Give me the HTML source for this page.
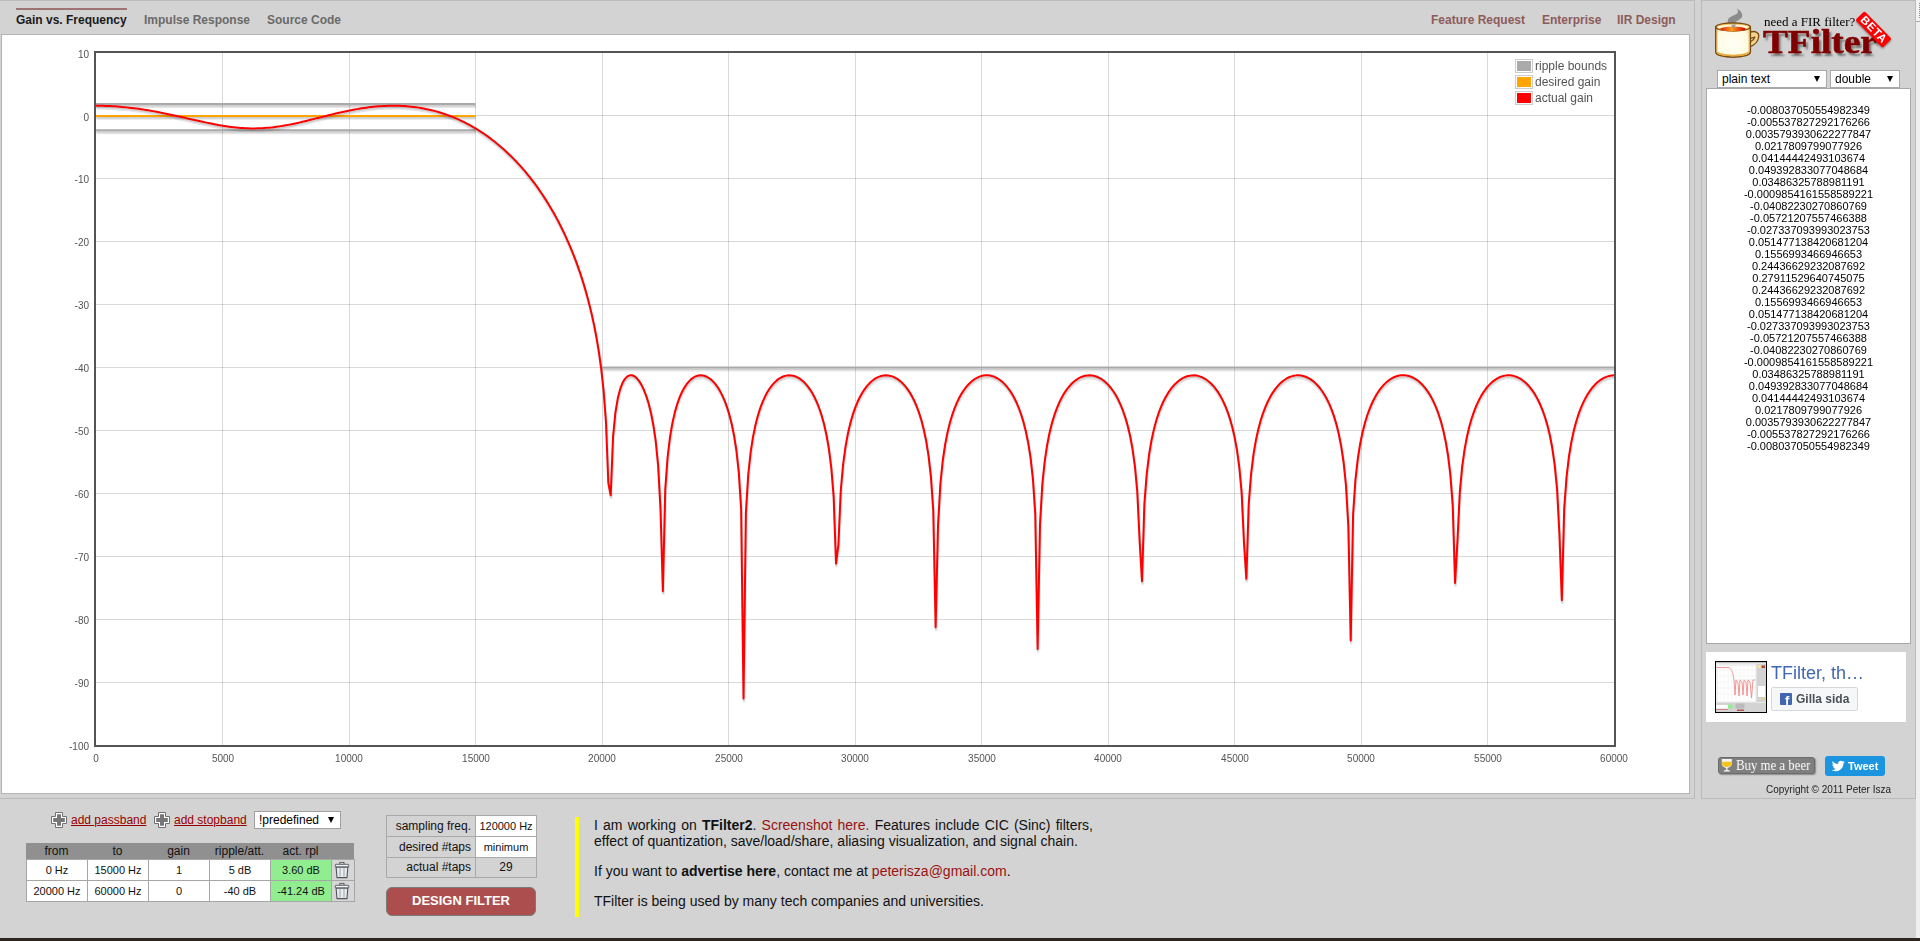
<!DOCTYPE html>
<html><head><meta charset="utf-8"><title>TFilter</title>
<style>
html,body{margin:0;padding:0}
body{width:1920px;height:941px;overflow:hidden;position:relative;background:#d3d3d3;font-family:"Liberation Sans",sans-serif;color:#111}
.abs{position:absolute}
.t{position:absolute;white-space:nowrap}
#maincont{position:absolute;left:0;top:0;width:1694px;height:797px;border-top:1px solid #bababa;border-right:1px solid #bababa;border-bottom:1px solid #bababa}
#panel{position:absolute;left:1px;top:34px;width:1687px;height:758px;border:1px solid #b4b4b4;background:#fff}
.tab{position:absolute;top:13px;font-size:12px;line-height:14px;font-weight:bold;color:#6a6a6a;white-space:nowrap}
.lnk{position:absolute;top:13px;font-size:12px;line-height:14px;font-weight:bold;color:#8e5b5b;white-space:nowrap}
.yl{position:absolute;will-change:transform;left:40.5px;width:48px;text-align:right;font-size:10px;line-height:12px;color:#545454}
.xl{position:absolute;will-change:transform;top:752.5px;width:60px;text-align:center;font-size:10px;line-height:12px;color:#545454}
.lg{position:absolute;left:1515px;width:16px;height:12px;border:1px solid #ccc;background:#fff}
.lg i{position:absolute;left:1px;top:1px;width:14px;height:10px}
.lgt{position:absolute;will-change:transform;left:1535px;font-size:12px;line-height:14px;color:#545454;white-space:nowrap}
#side{position:absolute;left:1701px;top:0;width:213px;height:797px;border:1px solid #bababa;border-top-color:#bababa}
.sel{position:absolute;background:#fff;border:1px solid #a9a9a9;box-sizing:border-box;font-size:12px;line-height:15px;color:#000}
.sel span{position:absolute;left:4px;top:1px}
.arr{position:absolute;top:5px;width:0;height:0;border-left:3.5px solid transparent;border-right:3.5px solid transparent;border-top:6px solid #000}
#ta{position:absolute;left:1706px;top:88px;width:203px;height:554px;border:1px solid #a9a9a9;background:#fff}
#coefs{position:absolute;left:0;top:15px;width:203px;text-align:center;font-size:11px;line-height:12px;color:#000}
.bt{position:absolute;font-size:12px;line-height:14px;color:#111;white-space:nowrap}
.cell{position:absolute;background:#fff;font-size:11px;line-height:20px;text-align:center;color:#111;height:20px}
.pcell{position:absolute;height:20px;line-height:20px;font-size:12px;color:#111}
</style></head><body>

<div id="maincont"></div>
<!-- tabs -->
<div class="abs" style="left:16px;top:8px;width:111px;height:2px;background:#9e7373"></div>
<div class="tab" style="left:16px;color:#1a1a1a">Gain vs. Frequency</div>
<div class="tab" style="left:144px">Impulse Response</div>
<div class="tab" style="left:267px">Source Code</div>
<div class="lnk" style="left:1431px">Feature Request</div>
<div class="lnk" style="left:1542px">Enterprise</div>
<div class="lnk" style="left:1617px">IIR Design</div>

<div id="panel"></div>
<svg id="chart" width="1920" height="941" viewBox="0 0 1920 941" style="position:absolute;left:0;top:0">
<defs><path id="pr" d="M96.00 105.74L98.37 105.75L100.74 105.78L103.12 105.83L105.49 105.90L107.86 105.99L110.23 106.10L112.60 106.22L114.97 106.37L117.35 106.53L119.72 106.72L122.09 106.92L124.46 107.14L126.83 107.38L129.21 107.64L131.58 107.91L133.95 108.20L136.32 108.51L138.69 108.84L141.07 109.18L143.44 109.54L145.81 109.92L148.18 110.31L150.55 110.71L152.93 111.13L155.30 111.57L157.67 112.01L160.04 112.47L162.41 112.94L164.78 113.42L167.16 113.92L169.53 114.42L171.90 114.93L174.27 115.44L176.64 115.97L179.02 116.50L181.39 117.03L183.76 117.57L186.13 118.11L188.50 118.65L190.88 119.19L193.25 119.73L195.62 120.27L197.99 120.80L200.36 121.33L202.73 121.85L205.11 122.36L207.48 122.86L209.85 123.35L212.22 123.82L214.59 124.28L216.97 124.73L219.34 125.15L221.71 125.56L224.08 125.94L226.45 126.31L228.82 126.64L231.20 126.96L233.57 127.24L235.94 127.50L238.31 127.72L240.68 127.92L243.06 128.09L245.43 128.22L247.80 128.32L250.17 128.38L252.54 128.41L254.92 128.41L257.29 128.37L259.66 128.30L262.03 128.19L264.40 128.05L266.77 127.87L269.15 127.66L271.52 127.42L273.89 127.14L276.26 126.83L278.63 126.50L281.01 126.13L283.38 125.74L285.75 125.33L288.12 124.88L290.49 124.42L292.87 123.93L295.24 123.43L297.61 122.91L299.98 122.37L302.35 121.81L304.73 121.25L307.10 120.67L309.47 120.09L311.84 119.50L314.21 118.90L316.58 118.30L318.96 117.70L321.33 117.10L323.70 116.50L326.07 115.91L328.44 115.32L330.82 114.73L333.19 114.15L335.56 113.59L337.93 113.03L340.30 112.49L342.68 111.96L345.05 111.44L347.42 110.94L349.79 110.46L352.16 109.99L354.53 109.55L356.91 109.12L359.28 108.72L361.65 108.33L364.02 107.97L366.39 107.64L368.77 107.33L371.14 107.04L373.51 106.78L375.88 106.55L378.25 106.34L380.62 106.17L383.00 106.02L385.37 105.90L387.74 105.81L390.11 105.75L392.48 105.72L394.86 105.73L397.23 105.76L399.60 105.83L401.97 105.94L404.34 106.07L406.72 106.25L409.09 106.45L411.46 106.69L413.83 106.97L416.20 107.28L418.57 107.63L420.95 108.02L423.32 108.45L425.69 108.91L428.06 109.41L430.43 109.95L432.81 110.53L435.18 111.15L437.55 111.82L439.92 112.52L442.29 113.26L444.67 114.05L447.04 114.88L449.41 115.75L451.78 116.67L454.15 117.63L456.52 118.64L458.90 119.69L461.27 120.79L463.64 121.94L466.01 123.13L468.38 124.38L470.76 125.67L473.13 127.01L475.50 128.41L477.87 129.85L480.24 131.35L482.62 132.91L484.99 134.52L487.36 136.18L489.73 137.91L492.10 139.69L494.48 141.53L496.85 143.43L499.22 145.40L501.59 147.43L503.96 149.52L506.33 151.69L508.71 153.92L511.08 156.22L513.45 158.60L515.82 161.05L518.19 163.58L520.57 166.19L522.94 168.88L525.31 171.66L527.68 174.52L530.05 177.48L532.42 180.53L534.80 183.69L537.17 186.94L539.54 190.31L541.91 193.78L544.28 197.38L546.66 201.10L549.03 204.95L551.40 208.94L553.77 213.08L556.14 217.37L558.52 221.84L560.89 226.48L563.26 231.31L565.63 236.35L568.00 241.61L570.38 247.12L572.75 252.90L575.12 258.98L577.49 265.40L579.86 272.19L582.23 279.41L584.61 287.12L586.98 295.42L589.35 304.41L591.72 314.25L594.09 325.16L596.47 337.47L598.84 351.70L601.21 368.76L603.58 390.50L605.95 421.58L608.33 482.81L610.70 495.20L613.07 436.39L615.44 412.23L617.81 398.12L620.18 388.97L622.56 382.85L624.93 378.84L627.30 376.41L629.67 375.28L632.04 375.26L634.42 376.23L636.79 378.15L639.16 381.02L641.53 384.86L643.90 389.77L646.27 395.90L648.65 403.51L651.02 413.03L653.39 425.20L655.76 441.48L658.13 465.34L660.51 509.12L662.88 591.14L665.25 489.66L667.62 456.85L669.99 437.08L672.37 423.17L674.74 412.64L677.11 404.35L679.48 397.69L681.85 392.26L684.23 387.84L686.60 384.24L688.97 381.35L691.34 379.09L693.71 377.40L696.08 376.22L698.46 375.54L700.83 375.32L703.20 375.55L705.57 376.23L707.94 377.37L710.32 378.97L712.69 381.06L715.06 383.66L717.43 386.83L719.80 390.62L722.17 395.13L724.55 400.46L726.92 406.80L729.29 414.41L731.66 423.68L734.03 435.29L736.41 450.50L738.78 472.13L741.15 509.05L743.52 698.55L745.89 512.75L748.27 474.25L750.64 452.20L753.01 436.86L755.38 425.23L757.75 415.98L760.12 408.42L762.50 402.12L764.87 396.81L767.24 392.32L769.61 388.52L771.98 385.31L774.36 382.63L776.73 380.41L779.10 378.63L781.47 377.26L783.84 376.26L786.22 375.62L788.59 375.34L790.96 375.40L793.33 375.81L795.70 376.57L798.08 377.69L800.45 379.18L802.82 381.05L805.19 383.34L807.56 386.08L809.93 389.31L812.31 393.09L814.68 397.51L817.05 402.68L819.42 408.74L821.79 415.93L824.17 424.57L826.54 435.23L828.91 448.87L831.28 467.53L833.65 496.57L836.02 563.55L838.40 544.80L840.77 490.50L843.14 464.03L845.51 446.53L847.88 433.56L850.26 423.37L852.63 415.06L855.00 408.14L857.37 402.28L859.74 397.29L862.12 393.01L864.49 389.35L866.86 386.21L869.23 383.54L871.60 381.30L873.98 379.45L876.35 377.97L878.72 376.83L881.09 376.02L883.46 375.53L885.83 375.35L888.21 375.48L890.58 375.92L892.95 376.67L895.32 377.75L897.69 379.17L900.07 380.93L902.44 383.07L904.81 385.61L907.18 388.60L909.55 392.08L911.92 396.12L914.30 400.81L916.67 406.27L919.04 412.67L921.41 420.26L923.78 429.43L926.16 440.81L928.53 455.59L930.90 476.34L933.27 510.74L935.64 627.31L938.02 525.50L940.39 483.70L942.76 460.50L945.13 444.49L947.50 432.37L949.88 422.71L952.25 414.77L954.62 408.10L956.99 402.42L959.36 397.55L961.73 393.36L964.11 389.74L966.48 386.62L968.85 383.96L971.22 381.70L973.59 379.81L975.97 378.27L978.34 377.07L980.71 376.17L983.08 375.58L985.45 375.29L987.83 375.28L990.20 375.57L992.57 376.16L994.94 377.05L997.31 378.25L999.68 379.77L1002.06 381.63L1004.43 383.87L1006.80 386.49L1009.17 389.56L1011.54 393.12L1013.92 397.23L1016.29 401.99L1018.66 407.52L1021.03 413.99L1023.40 421.66L1025.78 430.93L1028.15 442.44L1030.52 457.42L1032.89 478.53L1035.26 513.90L1037.63 648.93L1040.01 524.01L1042.38 483.58L1044.75 460.79L1047.12 444.98L1049.49 432.96L1051.87 423.36L1054.24 415.45L1056.61 408.79L1058.98 403.12L1061.35 398.24L1063.72 394.03L1066.10 390.38L1068.47 387.24L1070.84 384.54L1073.21 382.23L1075.58 380.30L1077.96 378.71L1080.33 377.44L1082.70 376.47L1085.07 375.81L1087.44 375.43L1089.82 375.34L1092.19 375.53L1094.56 376.01L1096.93 376.78L1099.30 377.85L1101.67 379.23L1104.05 380.93L1106.42 382.98L1108.79 385.41L1111.16 388.25L1113.53 391.53L1115.91 395.33L1118.28 399.72L1120.65 404.80L1123.02 410.71L1125.39 417.65L1127.77 425.93L1130.14 436.03L1132.51 448.79L1134.88 465.83L1137.25 491.17L1139.62 540.58L1142.00 581.29L1144.37 504.18L1146.74 473.58L1149.11 454.28L1151.48 440.26L1153.86 429.35L1156.23 420.49L1158.60 413.12L1160.97 406.88L1163.34 401.53L1165.72 396.92L1168.09 392.92L1170.46 389.46L1172.83 386.47L1175.20 383.90L1177.58 381.72L1179.95 379.89L1182.32 378.39L1184.69 377.20L1187.06 376.31L1189.43 375.71L1191.81 375.39L1194.18 375.36L1196.55 375.60L1198.92 376.12L1201.29 376.93L1203.67 378.04L1206.04 379.45L1208.41 381.19L1210.78 383.27L1213.15 385.72L1215.53 388.58L1217.90 391.89L1220.27 395.72L1222.64 400.13L1225.01 405.23L1227.38 411.16L1229.76 418.13L1232.13 426.45L1234.50 436.59L1236.87 449.40L1239.24 466.54L1241.62 492.09L1243.99 542.33L1246.36 578.84L1248.73 503.84L1251.10 473.53L1253.47 454.35L1255.85 440.39L1258.22 429.51L1260.59 420.68L1262.96 413.31L1265.33 407.07L1267.71 401.73L1270.08 397.11L1272.45 393.10L1274.82 389.63L1277.19 386.63L1279.57 384.05L1281.94 381.85L1284.31 380.00L1286.68 378.48L1289.05 377.26L1291.42 376.35L1293.80 375.72L1296.17 375.37L1298.54 375.30L1300.91 375.51L1303.28 375.99L1305.66 376.76L1308.03 377.81L1310.40 379.17L1312.77 380.85L1315.14 382.86L1317.52 385.24L1319.89 388.02L1322.26 391.23L1324.63 394.94L1327.00 399.21L1329.38 404.15L1331.75 409.89L1334.12 416.60L1336.49 424.58L1338.86 434.25L1341.23 446.34L1343.61 462.27L1345.98 485.25L1348.35 526.28L1350.72 640.44L1353.09 514.22L1355.47 479.27L1357.84 458.31L1360.21 443.41L1362.58 431.94L1364.95 422.69L1367.33 415.02L1369.70 408.54L1372.07 402.99L1374.44 398.20L1376.81 394.06L1379.18 390.46L1381.56 387.34L1383.93 384.65L1386.30 382.35L1388.67 380.40L1391.04 378.79L1393.42 377.49L1395.79 376.48L1398.16 375.77L1400.53 375.33L1402.90 375.17L1405.28 375.28L1407.65 375.67L1410.02 376.33L1412.39 377.29L1414.76 378.53L1417.13 380.09L1419.51 381.97L1421.88 384.20L1424.25 386.82L1426.62 389.85L1428.99 393.35L1431.37 397.38L1433.74 402.03L1436.11 407.42L1438.48 413.70L1440.85 421.10L1443.22 429.99L1445.60 440.93L1447.97 454.99L1450.34 474.35L1452.71 505.07L1455.08 582.93L1457.46 540.80L1459.83 491.67L1462.20 466.40L1464.57 449.39L1466.94 436.65L1469.32 426.56L1471.69 418.27L1474.06 411.32L1476.43 405.40L1478.80 400.31L1481.17 395.90L1483.55 392.08L1485.92 388.76L1488.29 385.90L1490.66 383.43L1493.03 381.34L1495.41 379.58L1497.78 378.15L1500.15 377.01L1502.52 376.17L1504.89 375.62L1507.27 375.33L1509.64 375.32L1512.01 375.59L1514.38 376.13L1516.75 376.95L1519.12 378.06L1521.50 379.48L1523.87 381.21L1526.24 383.28L1528.61 385.72L1530.98 388.56L1533.36 391.84L1535.73 395.62L1538.10 399.98L1540.47 405.02L1542.84 410.87L1545.22 417.72L1547.59 425.88L1549.96 435.80L1552.33 448.27L1554.70 464.82L1557.08 489.10L1559.45 534.50L1561.82 600.25L1564.19 508.86L1566.56 476.52L1568.93 456.53L1571.31 442.14L1573.68 430.98L1576.05 421.95L1578.42 414.44L1580.79 408.08L1583.17 402.63L1585.54 397.92L1587.91 393.84L1590.28 390.30L1592.65 387.23L1595.03 384.59L1597.40 382.33L1599.77 380.42L1602.14 378.84L1604.51 377.56L1606.88 376.59L1609.26 375.90L1611.63 375.49L1614.00 375.35"/><path id="pg" d="M96.00 104.02L475.50 104.02M96.00 130.32L475.50 130.32M602.00 367.55L1614.00 367.55"/><path id="po" d="M96.00 115.91L475.50 115.91"/></defs>
<g fill="rgba(0,0,0,0.15)"><rect x="222" y="53" width="1" height="692"/><rect x="349" y="53" width="1" height="692"/><rect x="475" y="53" width="1" height="692"/><rect x="602" y="53" width="1" height="692"/><rect x="728" y="53" width="1" height="692"/><rect x="855" y="53" width="1" height="692"/><rect x="981" y="53" width="1" height="692"/><rect x="1108" y="53" width="1" height="692"/><rect x="1234" y="53" width="1" height="692"/><rect x="1361" y="53" width="1" height="692"/><rect x="1487" y="53" width="1" height="692"/><rect x="96" y="115" width="1518" height="1"/><rect x="96" y="178" width="1518" height="1"/><rect x="96" y="241" width="1518" height="1"/><rect x="96" y="304" width="1518" height="1"/><rect x="96" y="367" width="1518" height="1"/><rect x="96" y="430" width="1518" height="1"/><rect x="96" y="493" width="1518" height="1"/><rect x="96" y="556" width="1518" height="1"/><rect x="96" y="619" width="1518" height="1"/><rect x="96" y="682" width="1518" height="1"/></g>
<rect x="95" y="52" width="1520" height="694" fill="none" stroke="#545454" stroke-width="2"/>
<g fill="none" stroke-linejoin="round">
<use href="#pg" transform="translate(0.434 2.462)" stroke="rgba(0,0,0,0.1)" stroke-width="3"/><use href="#pg" transform="translate(0.304 1.723)" stroke="rgba(0,0,0,0.1)" stroke-width="1.5"/><use href="#pg" stroke="#aaa" stroke-width="2"/>
<use href="#po" transform="translate(0.434 2.462)" stroke="rgba(0,0,0,0.1)" stroke-width="3"/><use href="#po" transform="translate(0.304 1.723)" stroke="rgba(0,0,0,0.1)" stroke-width="1.5"/><use href="#po" stroke="#ffa500" stroke-width="2"/>
<use href="#pr" transform="translate(0.434 2.462)" stroke="rgba(0,0,0,0.1)" stroke-width="3"/><use href="#pr" transform="translate(0.304 1.723)" stroke="rgba(0,0,0,0.1)" stroke-width="1.5"/><use href="#pr" stroke="#f00" stroke-width="2"/>
</g>
</svg>
<div class="yl" style="top:48.6px">10</div>
<div class="yl" style="top:111.5px">0</div>
<div class="yl" style="top:174.4px">-10</div>
<div class="yl" style="top:237.3px">-20</div>
<div class="yl" style="top:300.2px">-30</div>
<div class="yl" style="top:363.1px">-40</div>
<div class="yl" style="top:426.1px">-50</div>
<div class="yl" style="top:489.0px">-60</div>
<div class="yl" style="top:551.9px">-70</div>
<div class="yl" style="top:614.8px">-80</div>
<div class="yl" style="top:677.7px">-90</div>
<div class="yl" style="top:740.6px">-100</div>
<div class="xl" style="left:66.3px">0</div>
<div class="xl" style="left:192.8px">5000</div>
<div class="xl" style="left:319.3px">10000</div>
<div class="xl" style="left:445.8px">15000</div>
<div class="xl" style="left:572.3px">20000</div>
<div class="xl" style="left:698.8px">25000</div>
<div class="xl" style="left:825.3px">30000</div>
<div class="xl" style="left:951.8px">35000</div>
<div class="xl" style="left:1078.3px">40000</div>
<div class="xl" style="left:1204.8px">45000</div>
<div class="xl" style="left:1331.3px">50000</div>
<div class="xl" style="left:1457.8px">55000</div>
<div class="xl" style="left:1584.3px">60000</div>
<!-- legend -->
<div class="lg" style="top:59px"><i style="background:#aaa"></i></div>
<div class="lg" style="top:75px"><i style="background:#ffa500"></i></div>
<div class="lg" style="top:91px"><i style="background:#f00"></i></div>
<div class="lgt" style="top:59px">ripple bounds</div>
<div class="lgt" style="top:75px">desired gain</div>
<div class="lgt" style="top:91px">actual gain</div>

<!-- sidebar -->
<div id="side"></div>
<div class="abs" style="left:1916px;top:0;width:4px;height:938px;background:#f0f0f0"></div>
<div class="abs" style="left:1916px;top:0;width:4px;height:21px;background:#f4f4f4;border-bottom:1px solid #a8a8a8"><i style="position:absolute;left:3px;top:3px;width:1px;height:1px;background:#8c8c8c"></i><i style="position:absolute;left:3px;top:5px;width:1px;height:1px;background:#8c8c8c"></i><i style="position:absolute;left:3px;top:7px;width:1px;height:1px;background:#8c8c8c"></i><i style="position:absolute;left:3px;top:9px;width:1px;height:1px;background:#8c8c8c"></i><i style="position:absolute;left:3px;top:11px;width:1px;height:1px;background:#8c8c8c"></i><i style="position:absolute;left:3px;top:13px;width:1px;height:1px;background:#8c8c8c"></i><i style="position:absolute;left:3px;top:15px;width:1px;height:1px;background:#8c8c8c"></i><i style="position:absolute;left:3px;top:17px;width:1px;height:1px;background:#8c8c8c"></i></div>

<svg class="abs" style="left:1710px;top:5px" width="54" height="58" viewBox="0 0 54 58">
 <defs>
  <radialGradient id="cupb" cx="0.48" cy="0.55" r="0.65"><stop offset="0" stop-color="#fffff8"/><stop offset="0.75" stop-color="#fefbe0"/><stop offset="1" stop-color="#f3e8b0"/></radialGradient>
  <linearGradient id="tea" x1="0" x2="1"><stop offset="0" stop-color="#e02010"/><stop offset="0.45" stop-color="#f3a020"/><stop offset="1" stop-color="#d80000"/></linearGradient>
 </defs>
 <path d="M26.7 3.6 C30.8 5.8 33.2 9 31.9 12 C30.6 15 26.2 15.6 25.6 17.6 C25.3 18.6 26 19.6 26.6 20.6 L21.2 21 C18 19.5 16.8 16.5 18.4 13.8 C20.3 10.8 26.3 10.4 27.7 7.8 C28.2 6.5 27.8 5 26.7 3.6Z" fill="#8c8c8c"/>
 <path d="M39.5 27.5 C45 25.2 49.2 27.2 48.7 31.8 C48.2 36.5 44.5 40.2 39.5 41.8 L39.5 37.2 C42 36 44.3 34 44.8 32.2 L39.5 33.6Z" fill="#f1d48c" stroke="#7d4c10" stroke-width="1.3" stroke-linejoin="round"/>
 <path d="M5.8 22 L5.8 47 C5.8 53.8 40.3 53.8 40.3 47 L40.3 22 Z" fill="url(#cupb)" stroke="#7d4c10" stroke-width="1.6"/>
 <path d="M7 23 L7 46.5 M39.1 23 L39.1 46.5" stroke="#eab54a" stroke-width="0.9"/>
 <path d="M6.6 45.5 C9 51 37.1 51 39.5 45.5 L39.5 47.8 C37.6 52.6 8.5 52.6 6.6 47.8Z" fill="#e7ab3c"/>
 <ellipse cx="23.05" cy="22" rx="17.25" ry="3.9" fill="#fff6d6" stroke="#7d4c10" stroke-width="1.6"/>
 <ellipse cx="23.05" cy="22.1" rx="16" ry="3" fill="none" stroke="#f2c257" stroke-width="0.8"/>
 <ellipse cx="23" cy="24" rx="12.7" ry="2.6" fill="url(#tea)"/>
 <path d="M21.3 19.6 L25.8 19.6 L24.6 22.4 L22.2 22.4Z" fill="#9c9c9c"/>
</svg>
<div class="t" style="will-change:transform;left:1764px;top:14px;font-family:'Liberation Serif',serif;font-size:13px;line-height:16px;color:#000">need a FIR filter?</div>
<div class="t" style="will-change:transform;left:1763px;top:23px;font-family:'Liberation Serif',serif;font-weight:bold;font-size:33px;line-height:38px;color:#800000;-webkit-text-stroke:0.6px #800000;transform:scaleX(1.13);transform-origin:0 0;text-shadow:2px 3px 2px rgba(0,0,0,0.45)">TFilter</div>
<div class="abs" style="left:1853.7px;top:22.7px;width:39px;height:13px;background:#f00;transform:rotate(45.5deg);transform-origin:50% 50%;box-shadow:1px 1px 2px rgba(0,0,0,0.35);border-radius:2px">
 <div style="position:absolute;left:0;top:0;width:39px;text-align:center;font-size:11.5px;line-height:13px;font-weight:bold;color:#fff;letter-spacing:0.5px;text-indent:0.5px">BETA</div>
</div>

<div class="sel" style="left:1717px;top:70px;width:110px;height:18px"><span>plain text</span><i class="arr" style="left:96px"></i></div>
<div class="sel" style="left:1830px;top:70px;width:70px;height:18px"><span>double</span><i class="arr" style="left:56px"></i></div>
<div id="ta"><div id="coefs">-0.008037050554982349<br>-0.005537827292176266<br>0.0035793930622277847<br>0.0217809799077926<br>0.04144442493103674<br>0.049392833077048684<br>0.03486325788981191<br>-0.0009854161558589221<br>-0.04082230270860769<br>-0.05721207557466388<br>-0.027337093993023753<br>0.051477138420681204<br>0.1556993466946653<br>0.24436629232087692<br>0.27911529640745075<br>0.24436629232087692<br>0.1556993466946653<br>0.051477138420681204<br>-0.027337093993023753<br>-0.05721207557466388<br>-0.04082230270860769<br>-0.0009854161558589221<br>0.03486325788981191<br>0.049392833077048684<br>0.04144442493103674<br>0.0217809799077926<br>0.0035793930622277847<br>-0.005537827292176266<br>-0.008037050554982349</div></div>

<!-- fb widget -->
<div class="abs" style="left:1706px;top:652px;width:200px;height:70px;background:#fff"></div>
<div class="abs" style="left:1715px;top:661px;width:50px;height:50px;border:1px solid #000;background:#fff;overflow:hidden">
 <svg width="50" height="50" viewBox="0 0 50 50"><rect x="0" y="0" width="50" height="1.5" fill="#bbb"/><rect x="0" y="1.5" width="50" height="0.8" fill="#eee"/><rect x="40.5" y="2" width="9.5" height="38" fill="#d3d3d3"/><rect x="42" y="24" width="7" height="11" fill="#fff"/><rect x="42" y="3" width="3" height="3" fill="#f5e6a0"/><rect x="45.5" y="3.5" width="3.5" height="2.5" fill="#a44"/><rect x="46" y="36" width="3" height="1.5" fill="#e8d070"/>
 <g stroke="#eee" stroke-width="0.5"><path d="M4 3 V39 M8 3 V39 M12 3 V39 M16 3 V39 M20 3 V39 M24 3 V39 M28 3 V39 M32 3 V39 M36 3 V39"/><path d="M1 8 H40 M1 14 H40 M1 20 H40 M1 26 H40 M1 32 H40"/></g>
 <rect x="1" y="3" width="39" height="37" fill="none" stroke="#ccc" stroke-width="0.5"/>
 <path d="M0 5.5 H12 C15 5.5 17 10 18 18 L19 33 L20 18 L22 21 L23 34 L24 18 L26 20 L27 33 L28 18 L30 20 L31 34 L32 18 L34 20 L35.5 36 L37 18 H39" fill="none" stroke="#f08a8a" stroke-width="0.9"/>
 <path d="M18 18 H40" stroke="#ccc" stroke-width="0.5"/>
 <rect x="0" y="40.5" width="50" height="9.5" fill="#d3d3d3"/><rect x="0" y="43" width="12" height="3.5" fill="#fff"/><rect x="12" y="42.5" width="4.5" height="4" fill="#90ee90"/><rect x="19.5" y="41.5" width="9" height="5" fill="#bbb"/><rect x="21" y="47.5" width="7" height="1.5" fill="#b55"/><rect x="0" y="47" width="12" height="1" fill="#c88"/></svg>
</div>
<div class="t" style="will-change:transform;left:1771px;top:662px;font-size:18px;line-height:22px;color:#4267b2">TFilter, th…</div>
<div class="abs" style="left:1771px;top:687px;width:85px;height:22px;background:#f6f7f9;border:1px solid #d6d8dc;border-radius:2px"></div>
<div class="abs" style="left:1780px;top:693px;width:12px;height:12px;background:#4267b2;border-radius:1px;overflow:hidden"><div style="position:absolute;left:5px;top:1px;font-size:13px;line-height:14px;font-weight:bold;color:#fff">f</div></div>
<div class="t" style="will-change:transform;left:1796px;top:692px;font-size:12px;line-height:14px;font-weight:bold;color:#4b4f56">Gilla sida</div>

<!-- beer / tweet -->
<div class="abs" style="left:1718px;top:757px;width:95px;height:15px;background:#7f7f7f;border:1px solid #6c6c6c;border-radius:3px;box-shadow:1px 1px 1.5px rgba(0,0,0,0.35)"></div>
<svg class="abs" style="left:1721px;top:758px" width="12" height="14" viewBox="0 0 12 14"><path d="M0.8 1 L10.8 1 L10.8 6 C10.5 8.8 8 9.5 6.5 9.8 L6.5 12 L8.8 12.6 L8.8 13.4 L2.8 13.4 L2.8 12.6 L5.1 12 L5.1 9.8 C3.6 9.5 1.1 8.8 0.8 6Z" fill="#f4f4f4"/><path d="M1.2 3.8 L10.4 3.8 L10.4 6 C10.1 8.3 8 9 5.8 9 C3.6 9 1.5 8.3 1.2 6Z" fill="#f7c21a"/></svg>
<div class="t" style="will-change:transform;left:1735.5px;top:756.5px;font-family:'Liberation Serif',serif;font-size:15px;line-height:17px;color:#fff;transform:scaleX(0.853);transform-origin:0 0">Buy me a beer</div>
<div class="abs" style="left:1825px;top:756px;width:60px;height:20px;background:#1b95e0;border-radius:3px"></div>
<svg class="abs" style="left:1832px;top:760px" width="13" height="12" viewBox="0 0 24 20"><path d="M23.6 2.4c-.9.4-1.8.6-2.8.8 1-.6 1.8-1.6 2.1-2.7-.9.6-2 1-3.1 1.2C18.9.7 17.6.1 16.2.1c-2.7 0-4.9 2.2-4.9 4.9 0 .4 0 .8.1 1.1C7.3 5.9 3.7 4 1.3 1 .9 1.7.6 2.6.6 3.5c0 1.7.9 3.2 2.2 4.1-.8 0-1.6-.2-2.2-.6v.1c0 2.4 1.7 4.4 3.9 4.8-.4.1-.8.2-1.3.2-.3 0-.6 0-.9-.1.6 2 2.4 3.4 4.6 3.4-1.7 1.3-3.8 2.1-6.1 2.1-.4 0-.8 0-1.2-.1 2.2 1.4 4.8 2.2 7.5 2.2 9.1 0 14-7.5 14-14v-.6c1-.7 1.8-1.6 2.5-2.6z" fill="#fff"/></svg>
<div class="t" style="will-change:transform;left:1848px;top:759px;font-size:11px;line-height:14px;font-weight:bold;color:#fff">Tweet</div>
<div class="t" style="left:1766px;top:784px;font-size:10px;line-height:12px;color:#222">Copyright © 2011 Peter Isza</div>

<!-- bottom controls -->
<svg class="abs" style="left:51px;top:812px" width="16" height="16" viewBox="0 0 16 16"><path d="M4.5 0.5 H11.5 V4.5 H15.5 V11.5 H11.5 V15.5 H4.5 V11.5 H0.5 V4.5 H4.5Z" fill="#fff" stroke="#707070" stroke-width="1" stroke-linejoin="round"/><path d="M6 2.2 H10 V6 H13.8 V10 H10 V13.8 H6 V10 H2.2 V6 H6Z" fill="#767676"/></svg>
<div class="bt" style="left:71px;top:813px;color:#990000;text-decoration:underline">add passband</div>
<svg class="abs" style="left:154px;top:812px" width="16" height="16" viewBox="0 0 16 16"><path d="M4.5 0.5 H11.5 V4.5 H15.5 V11.5 H11.5 V15.5 H4.5 V11.5 H0.5 V4.5 H4.5Z" fill="#fff" stroke="#707070" stroke-width="1" stroke-linejoin="round"/><path d="M6 2.2 H10 V6 H13.8 V10 H10 V13.8 H6 V10 H2.2 V6 H6Z" fill="#767676"/></svg>
<div class="bt" style="left:174px;top:813px;color:#990000;text-decoration:underline">add stopband</div>
<div class="sel" style="left:254px;top:811px;width:87px;height:18px;border-color:#a0a0a0"><span style="left:4px">!predefined</span><i class="arr" style="left:73px"></i></div>

<div class="abs" style="left:26px;top:843px;width:328px;height:16px;background:#909090"></div>
<div class="bt" style="left:26px;top:844px;width:61px;text-align:center">from</div>
<div class="bt" style="left:87px;top:844px;width:61px;text-align:center">to</div>
<div class="bt" style="left:148px;top:844px;width:61px;text-align:center">gain</div>
<div class="bt" style="left:209px;top:844px;width:61px;text-align:center">ripple/att.</div>
<div class="bt" style="left:270px;top:844px;width:61px;text-align:center">act. rpl</div>
<div class="abs" style="left:26px;top:859px;width:329px;height:43px;background:#a6a6a6"></div>
<div class="cell" style="left:27px;top:860px;width:60px">0 Hz</div>
<div class="cell" style="left:88px;top:860px;width:60px">15000 Hz</div>
<div class="cell" style="left:149px;top:860px;width:60px">1</div>
<div class="cell" style="left:210px;top:860px;width:60px">5 dB</div>
<div class="cell" style="left:271px;top:860px;width:60px;background:#90ee90">3.60 dB</div>
<div class="cell" style="left:332px;top:860px;width:22px;background:#d6d6d6"></div>
<div class="cell" style="left:27px;top:881px;width:60px">20000 Hz</div>
<div class="cell" style="left:88px;top:881px;width:60px">60000 Hz</div>
<div class="cell" style="left:149px;top:881px;width:60px">0</div>
<div class="cell" style="left:210px;top:881px;width:60px">-40 dB</div>
<div class="cell" style="left:271px;top:881px;width:60px;background:#90ee90">-41.24 dB</div>
<div class="cell" style="left:332px;top:881px;width:22px;background:#d6d6d6"></div>
<svg class="abs" style="left:334px;top:861px" width="16" height="18" viewBox="0 0 16 18"><rect x="5.8" y="1.4" width="4.2" height="1.9" fill="#f2f2f2" stroke="#50565c" stroke-width="0.9"/><rect x="1.3" y="3.3" width="13.4" height="2.8" rx="0.7" fill="#f6f6f6" stroke="#50565c" stroke-width="0.9"/><path d="M2.1 6.1 H13.8 L13 16.6 H3Z" fill="#e9ecef" stroke="#50565c" stroke-width="1.1"/><path d="M6 7 V15.5 M10 7 V15.5" stroke="#9aa3ab" stroke-width="1"/></svg>
<svg class="abs" style="left:334px;top:882px" width="16" height="18" viewBox="0 0 16 18"><rect x="5.8" y="1.4" width="4.2" height="1.9" fill="#f2f2f2" stroke="#50565c" stroke-width="0.9"/><rect x="1.3" y="3.3" width="13.4" height="2.8" rx="0.7" fill="#f6f6f6" stroke="#50565c" stroke-width="0.9"/><path d="M2.1 6.1 H13.8 L13 16.6 H3Z" fill="#e9ecef" stroke="#50565c" stroke-width="1.1"/><path d="M6 7 V15.5 M10 7 V15.5" stroke="#9aa3ab" stroke-width="1"/></svg>

<!-- params -->
<div class="abs" style="left:386px;top:815px;width:151px;height:63px;background:#a9a9a9"></div>
<div class="pcell" style="left:387px;top:816px;width:84px;background:#d3d3d3;text-align:right;padding-right:4px">sampling freq.</div>
<div class="pcell" style="left:476px;top:816px;width:60px;background:#fff;text-align:center;font-size:11px">120000 Hz</div>
<div class="pcell" style="left:387px;top:837px;width:84px;background:#d3d3d3;text-align:right;padding-right:4px">desired #taps</div>
<div class="pcell" style="left:476px;top:837px;width:60px;background:#fff;text-align:center;font-size:11px">minimum</div>
<div class="pcell" style="left:387px;top:858px;width:84px;height:19px;line-height:19px;background:#d3d3d3;text-align:right;padding-right:4px">actual #taps</div>
<div class="pcell" style="left:476px;top:858px;width:60px;height:19px;line-height:19px;background:#d3d3d3;text-align:center">29</div>
<div class="abs" style="left:386px;top:887px;width:148px;height:27px;background:#ad4e4e;border:1px solid #7a7a7a;border-radius:6px;color:#fff;font-weight:bold;font-size:13px;line-height:25px;text-align:center">DESIGN FILTER</div>

<!-- info -->
<div class="abs" style="left:575px;top:817px;width:4px;height:100px;background:#ffff00"></div>
<div class="abs" style="left:594px;top:817px;width:499px;font-size:14px;line-height:16px;color:#111">
 <p style="margin:0 0 14px 0;text-align:justify;text-align-last:left">I am working on <b>TFilter2</b>. <span style="color:#991111">Screenshot here.</span> Features include CIC (Sinc) filters, effect of quantization, save/load/share, aliasing visualization, and signal chain.</p>
 <p style="margin:0 0 14px 0">If you want to <b>advertise here</b>, contact me at <span style="color:#991111">peterisza@gmail.com</span>.</p>
 <p style="margin:0">TFilter is being used by many tech companies and universities.</p>
</div>

<div class="abs" style="left:0;top:938px;width:1920px;height:3px;background:#2b2621"></div>
</body></html>
